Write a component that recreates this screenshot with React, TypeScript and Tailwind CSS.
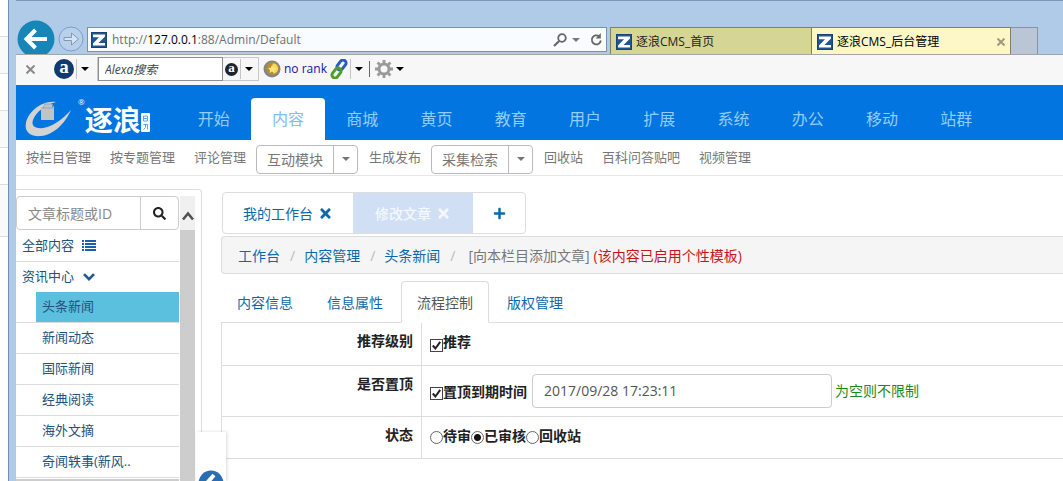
import { useState } from "react";
import type { ReactNode } from "react";
import clsx from "clsx";
import { FaPlus, FaSearch, FaTimes } from "react-icons/fa";

const mainNav = ["开始", "内容", "商城", "黄页", "教育", "用户", "扩展", "系统", "办公", "移动", "站群"];

const subNav = [
  { label: "按栏目管理" },
  { label: "按专题管理" },
  { label: "评论管理" },
  { label: "互动模块", menu: true },
  { label: "生成发布" },
  { label: "采集检索", menu: true },
  { label: "回收站" },
  { label: "百科问答贴吧" },
  { label: "视频管理" },
];

const categories = ["头条新闻", "新闻动态", "国际新闻", "经典阅读", "海外文摘", "奇闻轶事(新风.."];

const formTabs = ["内容信息", "信息属性", "流程控制", "版权管理"];

const states = ["待审", "已审核", "回收站"];

function Caret({ className }: { className?: string }) {
  return (
    <svg viewBox="0 0 8 4" className={clsx("h-1 w-2 shrink-0", className)} fill="currentColor" aria-hidden="true">
      <path d="M0 0h8L4 4z" />
    </svg>
  );
}

function SiteIcon() {
  return (
    <svg viewBox="0 0 16 16" className="h-4 w-4 shrink-0" aria-hidden="true">
      <rect width="16" height="16" fill="#1f5591" />
      <rect x="0.5" y="0.5" width="15" height="15" fill="none" stroke="#174474" />
      <path d="M2 2.5h12v2L7.5 11H14v2.6H2v-2L8 5.3H2z" fill="#fff" />
    </svg>
  );
}

function AlexaIcon({ className }: { className?: string }) {
  return (
    <span
      className={clsx(
        "flex shrink-0 items-center justify-center rounded-full font-['Liberation_Serif',serif] font-bold text-white",
        className
      )}
    >
      a
    </span>
  );
}

function BrowserBar() {
  return (
    <header className="flex h-[54px] shrink-0 items-start overflow-hidden border-t border-[#7b96b8] bg-[#afcbe8] pr-[25px]">
      <button aria-label="后退" className="mt-[19px] ml-px h-[38px] w-[38px] shrink-0">
        <svg viewBox="0 0 38 38" className="h-[38px] w-[38px]">
          <circle cx="19" cy="19" r="18.5" fill="#1685b8" />
          <path d="M30 19H10M18.5 10L9.5 19l9 9" fill="none" stroke="#fff" strokeWidth="4" />
        </svg>
      </button>
      <button aria-label="前进" className="mt-[25px] ml-[3px] h-[26px] w-[26px] shrink-0">
        <svg viewBox="0 0 26 26" className="h-[26px] w-[26px]">
          <circle cx="13" cy="13" r="12" fill="#b9d0ea" stroke="#7f9cc4" />
          <path d="M6 11.5h7.5V7l7 6-7 6v-4.5H6z" fill="#d5e3f3" stroke="#8498b4" />
        </svg>
      </button>
      <div className="mt-[26px] ml-[3px] flex h-[25px] min-w-0 flex-1 items-center border border-[#7390b5] bg-[#f9fcff] px-[3px]">
        <SiteIcon />
        <div className="ml-[5px] flex-1 truncate text-[12px] text-[#707070]">
          http://<span className="text-black">127.0.0.1</span>:88/Admin/Default
        </div>
        <button aria-label="搜索" className="ml-1">
          <svg viewBox="0 0 14 14" className="h-[14px] w-[14px]" fill="none" stroke="#666">
            <circle cx="9" cy="5" r="3.8" strokeWidth="1.8" />
            <path d="M6.2 8L1 13" strokeWidth="2.2" />
          </svg>
        </button>
        <Caret className="ml-[5px] text-[#777]" />
        <button aria-label="刷新" className="ml-[10px]">
          <svg viewBox="0 0 13 13" className="h-[13px] w-[13px]" fill="none" stroke="#666" strokeWidth="1.8">
            <path d="M10.8 7.5a4.5 4.5 0 1 1-1.7-4.2" />
            <path d="M10.8 0v5.6H5.6z" fill="#666" stroke="none" />
          </svg>
        </button>
      </div>
      <div className="mt-[26px] ml-[3px] flex h-7 shrink-0 text-[12px] text-[#222]">
        <a href="#home" className="flex w-[201px] items-center gap-1 border-t border-l border-[#857f62] bg-[#d5d595] pl-[5px]">
          <SiteIcon />
          逐浪CMS_首页
        </a>
        <a href="#admin" className="flex w-[200px] items-center gap-1 border border-b-0 border-[#857f62] bg-[#fdf6c6] px-[5px] text-black">
          <SiteIcon />
          <span className="flex-1">逐浪CMS_后台管理</span>
          <svg viewBox="0 0 8 8" className="h-2 w-2" stroke="#a09a7c" strokeWidth="2">
            <path d="M0.5 0.5l7 7M7.5 0.5l-7 7" />
          </svg>
        </a>
        <button aria-label="新建标签页" className="w-[27px] border-t border-r border-[#8a93a3] bg-[#bac5d6]" />
      </div>
    </header>
  );
}

function AlexaToolbar() {
  return (
    <div className="flex h-[31px] shrink-0 items-center border-t border-[#a5a5a5] bg-[#f7f7f7] pb-[2px]">
      <button aria-label="关闭工具栏" className="ml-[10px]">
        <svg viewBox="0 0 9 9" className="h-[9px] w-[9px]" stroke="#8a8a8a" strokeWidth="2">
          <path d="M0.5 0.5l8 8M8.5 0.5l-8 8" />
        </svg>
      </button>
      <AlexaIcon className="ml-[19px] h-5 w-5 bg-[#123a6e] pb-[3px] text-[19px]" />
      <span className="ml-[2px] h-5 w-px bg-[#c4c4c4]" />
      <Caret className="ml-1" />
      <div className="ml-[8px] flex h-6 items-center border border-[#c8c8c8]">
        <input
          aria-label="Alexa搜索"
          placeholder="Alexa搜索"
          className="h-6 w-[125px] border border-[#8e8e8e] bg-white pl-[6px] text-[12px] italic outline-none placeholder:text-[#444]"
        />
        <AlexaIcon className="ml-[2px] h-[13px] w-[13px] bg-[#1d2430] pb-[2px] text-[13px]" />
        <span className="ml-[2px] h-5 w-px bg-[#c4c4c4]" />
        <Caret className="mr-[5px] ml-1" />
      </div>
      <svg viewBox="0 0 18 18" className="ml-[4px] h-[18px] w-[18px]" aria-hidden="true">
        <circle cx="9" cy="9" r="8.5" fill="#80868f" />
        <circle cx="9.5" cy="8.5" r="6.5" fill="#b98f2e" />
        <path d="M10 3.5c3 0 5 2.200 5 5s-2 5-5 5c1-1.500 1-3 0-4.500s-1-4 0-5.500z" fill="#f6d95c" />
        <path d="M9 5l1.200 2.600 2.800.6-2 2 .3 2.800L9 11.600 6.600 13l.5-2.800-2-2 2.700-.6z" fill="#fbe384" />
      </svg>
      <span className="ml-[3px] text-[12px] font-medium text-[#1414a8]">no rank</span>
      <svg viewBox="0 0 18 20" className="ml-[3px] h-5 w-[18px]" fill="none" strokeWidth="3" aria-hidden="true">
        <rect x="8.5" y="0.5" width="6" height="11" rx="3" transform="rotate(38 11.5 6)" stroke="#2a5cc0" />
        <rect x="3.5" y="8.5" width="6" height="11" rx="3" transform="rotate(38 6.5 14)" stroke="#4f9f2a" />
      </svg>
      <span className="ml-[2px] h-5 w-px bg-[#c4c4c4]" />
      <Caret className="ml-1" />
      <span className="ml-[6px] h-4 w-px bg-[#666]" />
      <svg viewBox="0 0 20 20" className="ml-1 h-5 w-5" fill="none" stroke="#9a9a9a" aria-hidden="true">
        <circle cx="10" cy="10" r="5" strokeWidth="3" />
        <path
          d="M10 1v4M10 15v4M1 10h4M15 10h4M3.6 3.6l2.9 2.9M13.5 13.5l2.9 2.9M3.6 16.4l2.9-2.9M13.5 6.5l2.9-2.9"
          strokeWidth="2.8"
        />
      </svg>
      <Caret className="ml-[2px]" />
    </div>
  );
}

function Logo() {
  return (
    <a href="#logo" className="flex h-full w-[145px] shrink-0 items-end pb-[3px] pl-[9px] text-white">
      <svg viewBox="0 0 46 37" className="h-[37px] w-[46px] shrink-0" aria-hidden="true">
        <path
          d="M31 2C17 0 3 12 1 23c-2 9 5 14 15 13 12-1 24-12 30-26-8 9-19 17-28 18-8 1-12-2-10-8C11 12 20 5 31 2z"
          fill="#d3d3d3"
        />
        <path d="M16 7h4V4h7v3l2-1v14h-13z" fill="#c3c3c3" />
        <path d="M18 8l2-4h7l2 4M17 8h11" fill="none" stroke="#8fa5bd" />
      </svg>
      <span className="ml-[7px] self-start pt-[13px] text-[8px] leading-none">®</span>
      <span className="text-[28px] leading-[34px] font-bold whitespace-nowrap">逐浪</span>
      <svg viewBox="0 0 9 19" className="mb-[5px] h-[19px] w-[9px] shrink-0" aria-hidden="true">
        <rect width="9" height="19" rx="1" fill="#fff" />
        <path d="M2.5 3h4v5h-4zM2.5 5.5h4M2.5 11.5h4v5M4.5 11.5v3l-2 2" fill="none" stroke="#5ba6ea" />
      </svg>
    </a>
  );
}

function SubNav() {
  return (
    <nav className="flex h-9 shrink-0 items-center border-b border-[#e7e7e7] text-[13px] text-[#777]">
      {subNav.map((item) =>
        item.menu ? (
          <div key={item.label} className="mx-px mt-[3px] flex h-[29px] rounded-sm border border-[#bbb] text-[14px]">
            <button className="px-[10px]">{item.label}</button>
            <button aria-label={item.label + "菜单"} className="flex w-6 items-center justify-center border-l border-[#bbb]">
              <Caret />
            </button>
          </div>
        ) : (
          <a key={item.label} href="#sub" className="pr-[9px] pl-[10px] whitespace-nowrap">
            {item.label}
          </a>
        )
      )}
    </nav>
  );
}

function Sidebar() {
  const [active, setActive] = useState("头条新闻");

  return (
    <aside className="mt-[13px] flex w-[186px] shrink-0 overflow-hidden rounded-tr border-t border-r border-[#ddd] pt-[6px]">
      <div className="w-[163px] shrink-0 text-[13px] text-[#23527c]">
        <div className="flex h-[34px] rounded border border-[#ccc]">
          <input
            aria-label="文章标题或ID"
            placeholder="文章标题或ID"
            className="w-[123px] pl-[11px] text-[14px] outline-none placeholder:text-[#888]"
          />
          <button aria-label="搜索" className="flex flex-1 items-center justify-center border-l border-[#ccc] text-[13px] text-[#222]">
            <FaSearch />
          </button>
        </div>
        <a href="#all" className="flex h-8 items-center border-b border-[#ddd] pl-[6px]">
          全部内容
          <svg viewBox="0 0 14 11" className="ml-2 h-[11px] w-[14px]" fill="#1c62a8" aria-hidden="true">
            <path d="M0 0h2v2H0zM3 0h11v2H3zM0 3h2v2H0zM3 3h11v2H3zM0 6h2v2H0zM3 6h11v2H3zM0 9h2v2H0zM3 9h11v2H3z" />
          </svg>
        </a>
        <a href="#news" className="flex h-[30px] items-center pl-[6px]">
          资讯中心
          <svg viewBox="0 0 12 8" className="ml-[9px] h-2 w-3" fill="none" stroke="#1c5a96" strokeWidth="2.6" aria-hidden="true">
            <path d="M1 1.2l5 5 5-5" />
          </svg>
        </a>
        <ul>
          {categories.map((name) => (
            <li key={name} className="border-b border-[#ddd] pl-5">
              <button
                onClick={() => setActive(name)}
                className={clsx("block h-[30px] w-full pl-[6px] text-left", active === name && "bg-[#5bc0de]")}
              >
                {name}
              </button>
            </li>
          ))}
        </ul>
        <div className="mt-px h-4 bg-[#cdcdcd]" />
      </div>
      <div className="ml-px w-[15px] bg-[#cdcdcd]">
        <div className="flex h-[34px] justify-center bg-[#f0f0f0] pt-[15px]">
          <svg viewBox="0 0 12 10" className="h-[10px] w-3" fill="none" stroke="#505050" strokeWidth="2.6" aria-hidden="true">
            <path d="M1 8.5l5-6 5 6" />
          </svg>
        </div>
      </div>
    </aside>
  );
}

function Checkbox({ id }: { id: string }) {
  return (
    <span className="relative mt-[5px] h-[13px] w-[13px] shrink-0">
      <input id={id} type="checkbox" defaultChecked className="peer block h-[13px] w-[13px] appearance-none border border-[#444] bg-white" />
      <svg
        viewBox="0 0 13 13"
        className="pointer-events-none absolute inset-0 hidden peer-checked:block"
        fill="none"
        stroke="#222"
        strokeWidth="2"
      >
        <path d="M2.8 6.5l2.6 3 4.8-6.7" />
      </svg>
    </span>
  );
}

function Row({ label, children }: { label: string; children: ReactNode }) {
  return (
    <tr className="border-b border-[#ddd]">
      <th className="w-[200px] border-x border-[#ddd] px-2 pt-2 pb-3 text-right align-top leading-5 font-bold">{label}</th>
      <td className="px-2 py-2 align-top">{children}</td>
    </tr>
  );
}

function ArticleForm() {
  const [tab, setTab] = useState("流程控制");
  const [expires, setExpires] = useState("2017/09/28 17:23:11");

  return (
    <>
      <div className="mt-[7px] flex h-[42px] border-b border-[#ddd]">
        {formTabs.map((name) => (
          <button
            key={name}
            onClick={() => setTab(name)}
            className={clsx(
              "mr-[2px] -mb-px rounded-t border px-[15px]",
              tab === name ? "border-[#ddd] border-b-white bg-white text-[#555]" : "border-transparent text-[#0a69ad]"
            )}
          >
            {name}
          </button>
        ))}
      </div>
      <table className="w-full border-collapse text-[#222]">
        <tbody>
          <Row label="推荐级别">
            <div className="mb-[2px] flex h-6 items-center font-bold">
              <Checkbox id="recommend" />
              <label htmlFor="recommend" className="pb-[3px]">推荐</label>
            </div>
          </Row>
          <Row label="是否置顶">
            <div className="flex items-center">
              <Checkbox id="top" />
              <label htmlFor="top" className="font-bold">置顶到期时间</label>
              <input
                aria-label="到期时间"
                value={expires}
                onChange={(e) => setExpires(e.target.value)}
                className="ml-[5px] h-[34px] w-[300px] rounded border border-[#ccc] px-[11px] pb-px text-[#555] outline-none"
              />
              <span className="ml-[3px] pb-px text-[#1c8a1c]">为空则不限制</span>
            </div>
          </Row>
          <Row label="状态">
            <div className="mb-[5px] flex h-5 items-center font-bold">
              {states.map((name, i) => (
                <label key={name} className="flex items-center">
                  <input
                    type="radio"
                    name="state"
                    defaultChecked={i === 1}
                    className="mt-[5px] h-[13px] w-[13px] appearance-none rounded-full border border-[#666] bg-white checked:bg-[radial-gradient(circle,#111_3px,transparent_4px)]"
                  />
                  {name}
                </label>
              ))}
            </div>
          </Row>
        </tbody>
      </table>
    </>
  );
}

export default function App() {
  return (
    <div className="flex h-screen overflow-hidden bg-white font-['Open_Sans','Noto_Sans_CJK_SC',sans-serif] text-black">
      {/* edge of the page behind the window */}
      <div className="w-2 shrink-0">
        {[0, 1, 2, 3, 4].map((n) => (
          <div key={n} className="h-[37px] border-b border-[#ddd] even:bg-[#f9f9f9]" />
        ))}
        <div className="h-[52px] border-b border-[#ddd] bg-[#f9f9f9]" />
      </div>

      <div className="flex min-w-0 flex-1 flex-col border-l border-[#6f8db5] bg-[#afcbe8]">
        <div className="pl-[7px]">
          <BrowserBar />
        </div>
        <div className="ml-[7px] flex min-h-0 flex-1 flex-col bg-white">
          <AlexaToolbar />
          <nav className="flex h-[55px] shrink-0 items-end bg-[#0275e0]">
            <Logo />
            <div className="ml-4 grid w-[817px] shrink-0 grid-cols-11 text-[16px] text-[#93cdfb]">
              {mainNav.map((name) => (
                <a
                  key={name}
                  href="#nav"
                  className={clsx(
                    "mr-px flex h-[42px] items-center justify-center rounded-t",
                    name === "内容" && "bg-white text-[#7fbdf2]"
                  )}
                >
                  {name}
                </a>
              ))}
            </div>
          </nav>
          <SubNav />

          <div className="relative flex min-h-0 flex-1">
            <Sidebar />
            <main className="ml-[19px] min-w-0 flex-1 pt-4 text-[14px]">
              <div className="ml-px flex h-[42px] w-fit rounded border border-[#ddd] text-[#0a69ad]">
                <a href="#desk" className="flex items-center gap-[5px] px-5">
                  我的工作台 <FaTimes className="text-[15px]" />
                </a>
                <a href="#edit" className="flex items-center gap-[5px] bg-[#d0dff3] px-[22px] font-medium text-[#f3f8fe]">
                  修改文章 <FaTimes className="text-[15px]" />
                </a>
                <button aria-label="新标签" className="flex w-[52px] items-center justify-center">
                  <FaPlus className="text-[13px]" />
                </button>
              </div>

              <div className="mt-[2px] flex h-[38px] items-center rounded-l border border-r-0 border-[#ddd] bg-[#f5f5f5] pl-4 whitespace-nowrap text-[#0a69ad]">
                {["工作台", "内容管理", "头条新闻"].map((name) => (
                  <span key={name}>
                    <a href="#crumb">{name}</a>
                    <span className="pr-[9px] pl-[10px] text-[#bbb]">/</span>
                  </span>
                ))}
                <span className="ml-1 text-[#777]">[向本栏目添加文章]</span>
                <span className="ml-1 text-[#c8141a]">(该内容已启用个性模板)</span>
              </div>

              <ArticleForm />
            </main>

            {/* sidebar toggle */}
            <div className="absolute bottom-0 left-[180px] h-[49px] w-[30px] overflow-hidden bg-white shadow-[1px_0_3px_rgba(0,0,0,0.15)]">
              <button aria-label="收起" className="mt-[38px] ml-[2px] block h-[26px] w-[26px]">
                <svg viewBox="0 0 26 26" className="h-[26px] w-[26px]">
                  <circle cx="13" cy="13" r="12.5" fill="#2a6db0" />
                  <path d="M16 5l-7 8 7 8" fill="none" stroke="#fff" strokeWidth="4" />
                </svg>
              </button>
            </div>
          </div>
        </div>
      </div>
    </div>
  );
}
